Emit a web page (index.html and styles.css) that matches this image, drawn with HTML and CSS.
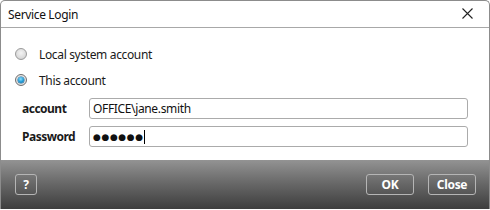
FILE: index.html
```html
<!DOCTYPE html>
<html>
<head>
<meta charset="utf-8">
<link rel="stylesheet" href="styles.css">
</head>
<body>
<div class="window">
  <div class="titlebar">
    <span class="title">Service Login</span>
    <svg class="close-x" width="11" height="11" viewBox="0 0 11 11"><path d="M0.5 0.5 L10.5 10.5 M10.5 0.5 L0.5 10.5" stroke="#222" stroke-width="1.1" fill="none"/></svg>
  </div>
  <div class="content">
    <div class="radio-row"><span class="radio"></span><span class="radio-label">Local system account</span></div>
    <div class="radio-row"><span class="radio checked"></span><span class="radio-label">This account</span></div>
    <div class="form">
      <div class="field">
        <span class="field-label">account</span>
        <div class="textbox">OFFICE\jane.smith</div>
      </div>
      <div class="field">
        <span class="field-label">Password</span>
        <div class="textbox"><span class="dots">●●●●●●</span><span class="caret"></span></div>
      </div>
    </div>
  </div>
  <div class="footer">
    <button class="btn help">?</button>
    <div class="spacer"></div>
    <button class="btn">OK</button>
    <button class="btn">Close</button>
  </div>
</div>
</body>
</html>
```

FILE: styles.css
```css
html, body {
  margin: 0;
  padding: 0;
  background: #ffffff;
}
body {
  font-family: "Noto Sans", "Open Sans", sans-serif;
  font-size: 12px;
  letter-spacing: -0.35px;
  color: #1a1a1a;
}
.window {
  width: 490px;
  height: 209px;
  box-sizing: border-box;
  border: 1px solid #8c8c8c;
  border-bottom: none;
  border-radius: 5px 5px 0 0;
  display: flex;
  flex-direction: column;
  overflow: hidden;
  background: #fff;
}
.titlebar {
  height: 26px;
  border-bottom: 1px solid #a8a8a8;
  display: flex;
  align-items: center;
  padding: 0 16px 0 7px;
  flex-shrink: 0;
}
.title {
  flex: 1;
  font-size: 12px;
  color: #111;
}
.close-x {
  display: block;
  margin-top: -1px;
}
.content {
  flex: 1;
  padding: 13px 0 0 14px;
}
.radio-row {
  height: 26px;
  display: flex;
  align-items: center;
}
.radio {
  width: 10px;
  height: 10px;
  border-radius: 50%;
  border: 1px solid #9a9a9a;
  background: radial-gradient(circle at 50% 40%, #f4f4f4 0%, #dcdcdc 60%, #c8c8c8 100%);
  flex-shrink: 0;
  position: relative;
}
.radio.checked {
  border-color: #6f6f6f;
  background: radial-gradient(circle at 50% 40%, #f0f0f0 0%, #d8d8d8 100%);
}
.radio.checked::after {
  content: "";
  position: absolute;
  left: 2px;
  top: 2px;
  width: 6px;
  height: 6px;
  border-radius: 50%;
  background: radial-gradient(circle at 45% 35%, #8fe0ff 0%, #1e9ad6 55%, #0b5f96 100%);
  box-shadow: 0 0 0 0.5px #1b6a9c;
}
.radio-label {
  margin-left: 12px;
  color: #1a1a1a;
}
.form {
  margin-top: 5px;
  display: flex;
  flex-direction: column;
  gap: 7px;
}
.field {
  display: flex;
  align-items: center;
}
.field-label {
  width: 67px;
  padding-left: 7px;
  font-weight: bold;
  letter-spacing: -0.5px;
  color: #1a1a1a;
}
.textbox {
  width: 379px;
  height: 21px;
  box-sizing: border-box;
  border: 1px solid #ababab;
  border-radius: 3px;
  padding: 0 0 0 3px;
  display: flex;
  align-items: center;
  color: #111;
}
.dots {
  font-family: "DejaVu Sans", sans-serif;
  font-size: 9px;
  letter-spacing: 0.6px;
  color: #111;
}
.caret {
  width: 1px;
  height: 14px;
  background: #000;
  margin-left: 0px;
}
.footer {
  height: 49px;
  box-sizing: border-box;
  padding: 14px 13px 0 14px;
  display: flex;
  align-items: flex-start;
  gap: 14px;
  background: linear-gradient(to bottom, #939393 0%, #6a6a6a 45%, #3d3d3d 100%);
  flex-shrink: 0;
}
.spacer {
  flex: 1;
}
.btn {
  width: 48px;
  height: 21px;
  box-sizing: border-box;
  border: 1px solid #b5b5b5;
  border-radius: 3px;
  background: transparent;
  color: #ffffff;
  font-family: "Noto Sans", "Open Sans", sans-serif;
  font-size: 12px;
  font-weight: bold;
  letter-spacing: -0.3px;
  padding: 0;
  line-height: 18px;
}
.btn.help {
  width: 22px;
}
```
